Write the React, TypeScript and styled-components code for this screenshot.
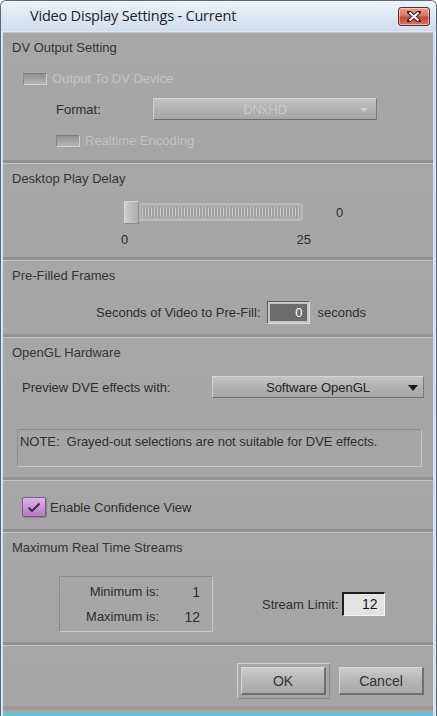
import styled, { createGlobalStyle } from 'styled-components'

const GlobalStyle = createGlobalStyle`
  html, body {
    margin: 0;
    padding: 0;
    background: #ffffff;
  }
  * {
    box-sizing: border-box;
  }
`

const Window = styled.div`
  width: 437px;
  height: 716px;
  display: flex;
  flex-direction: column;
  background: linear-gradient(#e4edf7, #d3e1ef 60px, #d8e4f0);
  border: 1px solid #5a6878;
  border-bottom: none;
  border-radius: 6px 6px 0 0;
  font-family: 'Liberation Sans', Arial, sans-serif;
  font-size: 13px;
  color: #2b2b2b;
  overflow: hidden;
`

const TitleBar = styled.div`
  height: 30px;
  flex: none;
  display: flex;
  align-items: center;
  justify-content: space-between;
  padding: 0 6px 2px 29px;
  background: linear-gradient(#eef4fa, #dce8f4 50%, #cfdeee);
`

const TitleText = styled.div`
  font-family: 'Open Sans', 'Noto Sans', sans-serif;
  font-size: 14.5px;
  color: #1a2230;
  letter-spacing: -0.2px;
`

const CloseButton = styled.div`
  width: 32px;
  height: 19px;
  margin-top: 2px;
  border: 1px solid #5e2a2a;
  border-radius: 3px;
  background: linear-gradient(#e9a592, #d8735c 48%, #c4462d 52%, #d8765c);
  display: flex;
  align-items: center;
  justify-content: center;
  box-shadow: inset 0 0 0 1px rgba(255, 255, 255, 0.45);
`

const Body = styled.div`
  flex: 1;
  margin: 1px 3px 0 2px;
  display: flex;
  flex-direction: column;
  background: #a6a6a6;
  border-bottom: 3px solid #58c8dc;
  box-shadow: 0 3px 0 #2c3a48;
`

const Section = styled.div<{ $h: number; $last?: boolean }>`
  height: ${p => p.$h}px;
  flex: none;
  position: relative;
  display: flex;
  flex-direction: column;
  padding: 7px 0 0 9px;
  border-top: 1px solid #c2c2c2;
  border-bottom: ${p => (p.$last ? '4px solid #999' : '3px solid #929292')};
  background: linear-gradient(#a7a7a7, #a5a5a5);
`

const SectionTitle = styled.div`
  color: #353535;
  height: 16px;
  line-height: 16px;
`

const Row = styled.div<{ $pl?: number; $mt?: number; $gap?: number }>`
  display: flex;
  align-items: center;
  padding-left: ${p => p.$pl ?? 0}px;
  margin-top: ${p => p.$mt ?? 0}px;
  gap: ${p => p.$gap ?? 0}px;
`

const Label = styled.span<{ $dim?: boolean; $w?: number }>`
  color: ${p => (p.$dim ? '#c3c3c3' : '#2e2e2e')};
  width: ${p => (p.$w ? `${p.$w}px` : 'auto')};
  white-space: nowrap;
`

const FlatCheck = styled.div`
  width: 24px;
  height: 12px;
  border-top: 1px solid #7c7c7c;
  border-left: 1px solid #8a8a8a;
  border-right: 1px solid #d0d0d0;
  border-bottom: 1px solid #d0d0d0;
  background: linear-gradient(#909090, #b6b6b6);
`

const PurpleCheck = styled.div`
  width: 24px;
  height: 20px;
  border: 1px solid #7d5a85;
  border-radius: 2px;
  background: linear-gradient(#e2b3ea, #c88ed2 60%, #b87cc2);
  display: flex;
  align-items: center;
  justify-content: center;
  box-shadow: 1px 1px 0 #858585;
`

const Dropdown = styled.div<{ $w: number; $dim?: boolean }>`
  width: ${p => p.$w}px;
  height: 22px;
  position: relative;
  display: flex;
  align-items: center;
  justify-content: center;
  color: ${p => (p.$dim ? '#cacaca' : '#262626')};
  border-top: 1px solid #d4d4d4;
  border-left: 1px solid #d0d0d0;
  border-right: 1px solid #7a7a7a;
  border-bottom: 1px solid #6e6e6e;
  background: linear-gradient(#c4c4c4, #b1b1b1 50%, #a7a7a7);
`

const Arrow = styled.div<{ $dim?: boolean }>`
  position: absolute;
  right: ${p => (p.$dim ? 8 : 5)}px;
  top: ${p => (p.$dim ? 9 : 8)}px;
  width: 0;
  height: 0;
  border-left: ${p => (p.$dim ? 4 : 5)}px solid transparent;
  border-right: ${p => (p.$dim ? 4 : 5)}px solid transparent;
  border-top: ${p => (p.$dim ? 4 : 6)}px solid ${p => (p.$dim ? '#d0d0d0' : '#1a1a1a')};
`

const SliderRow = styled.div`
  display: flex;
  align-items: center;
  margin: 14px 0 0 112px;
  height: 22px;
`

const Thumb = styled.div`
  width: 15px;
  height: 23px;
  flex: none;
  border: 1px solid #8e8e8e;
  border-top-color: #d6d6d6;
  border-left-color: #d6d6d6;
  background: linear-gradient(90deg, #cfcfcf, #bcbcbc 50%, #adadad);
`

const Track = styled.div`
  width: 164px;
  height: 18px;
  border: 1px solid #bdbdbd;
  border-left: none;
  border-radius: 0 4px 4px 0;
  background:
    repeating-linear-gradient(90deg, #cacaca 0 1px, #a0a0a0 1px 3px),
    #a8a8a8;
  background-clip: content-box;
  padding: 3px 2px 3px 0;
  box-shadow: inset 0 0 0 2px #b4b4b4;
`

const SliderValue = styled.span`
  margin-left: 33px;
  color: #2e2e2e;
`

const ScaleRow = styled.div`
  display: flex;
  justify-content: space-between;
  width: 190px;
  margin: 9px 0 0 109px;
`

const DarkInput = styled.div`
  width: 43px;
  height: 23px;
  border: 1px solid #e0e0e0;
  border-top-color: #5c5c5c;
  border-left-color: #5c5c5c;
  padding: 2px;
  background: #c6c6c6;
  display: flex;
`

const DarkInner = styled.div`
  flex: 1;
  background: #6c6c6c;
  color: #ffffff;
  text-align: right;
  padding-right: 4px;
  line-height: 17px;
`

const LightInput = styled.div`
  width: 43px;
  height: 24px;
  border: 1px solid #f4f4f4;
  border-top: 2px solid #1e1e1e;
  border-left: 2px solid #1e1e1e;
  background: #e4e4e4;
  color: #1a1a1a;
  text-align: right;
  padding-right: 6px;
  line-height: 20px;
  font-size: 14px;
`

const NoteBox = styled.div`
  width: 405px;
  height: 38px;
  margin: 31px 0 0 5px;
  border: 1px solid #c4c4c4;
  border-top-color: #8e8e8e;
  border-left-color: #8e8e8e;
  padding: 4px 0 0 2px;
  color: #303030;
  letter-spacing: -0.05px;
`

const StreamsBody = styled.div`
  display: flex;
  align-items: center;
  margin: 20px 0 0 47px;
`

const LimitBox = styled.div`
  width: 154px;
  height: 56px;
  border: 1px solid #c4c4c4;
  border-top-color: #8c8c8c;
  border-left-color: #8c8c8c;
  display: grid;
  grid-template-columns: 99px 41px;
  align-content: center;
  row-gap: 9px;
  color: #2e2e2e;
`

const LimitKey = styled.span`
  text-align: right;
`

const LimitVal = styled.span`
  text-align: right;
  font-size: 14px;
`

const Buttons = styled.div`
  display: flex;
  justify-content: flex-end;
  align-items: center;
  gap: 9px;
  margin: 10px 9px 0 0;
`

const FocusRing = styled.div`
  border: 1px solid #8a8a8a;
  border-top-color: #d0d0d0;
  border-left-color: #d0d0d0;
  padding: 3px;
`

const Button = styled.div<{ $w: number }>`
  width: ${p => p.$w}px;
  height: 28px;
  display: flex;
  align-items: center;
  justify-content: center;
  color: #333333;
  font-size: 14px;
  border-top: 1px solid #dadada;
  border-left: 1px solid #d4d4d4;
  border-right: 2px solid #707070;
  border-bottom: 2px solid #6e6e6e;
  background: linear-gradient(#cbcbcb, #b5b5b5 55%, #a9a9a9);
`

export default function App() {
  return (
    <>
      <GlobalStyle />
      <Window>
        <TitleBar>
          <TitleText>Video Display Settings - Current</TitleText>
          <CloseButton>
            <svg width="14" height="11" viewBox="0 0 14 11">
              <path d="M2 1 L12 10 M12 1 L2 10" stroke="#4a2020" strokeWidth="4" strokeLinecap="square" />
              <path d="M2.5 1.5 L11.5 9.5 M11.5 1.5 L2.5 9.5" stroke="#ffffff" strokeWidth="2.2" />
            </svg>
          </CloseButton>
        </TitleBar>
        <Body>
          <Section $h={131}>
            <SectionTitle>DV Output Setting</SectionTitle>
            <Row $pl={11} $mt={15} $gap={5}>
              <FlatCheck />
              <Label $dim>Output To DV Device</Label>
            </Row>
            <Row $pl={44} $mt={12}>
              <Label $w={97}>Format:</Label>
              <Dropdown $w={224} $dim>
                DNxHD
                <Arrow $dim />
              </Dropdown>
            </Row>
            <Row $pl={44} $mt={13} $gap={5}>
              <FlatCheck />
              <Label $dim>Realtime Encoding</Label>
            </Row>
          </Section>

          <Section $h={97}>
            <SectionTitle>Desktop Play Delay</SectionTitle>
            <SliderRow>
              <Thumb />
              <Track />
              <SliderValue>0</SliderValue>
            </SliderRow>
            <ScaleRow>
              <span>0</span>
              <span>25</span>
            </ScaleRow>
          </Section>

          <Section $h={77}>
            <SectionTitle>Pre-Filled Frames</SectionTitle>
            <Row $pl={84} $mt={17} $gap={6}>
              <Label>Seconds of Video to Pre-Fill:</Label>
              <DarkInput>
                <DarkInner>0</DarkInner>
              </DarkInput>
              <Label style={{ marginLeft: 2 }}>seconds</Label>
            </Row>
          </Section>

          <Section $h={143}>
            <SectionTitle>OpenGL Hardware</SectionTitle>
            <Row $pl={10} $mt={15}>
              <Label $w={190}>Preview DVE effects with:</Label>
              <Dropdown $w={212}>
                Software OpenGL
                <Arrow />
              </Dropdown>
            </Row>
            <NoteBox>NOTE:&nbsp; Grayed-out selections are not suitable for DVE effects.</NoteBox>
          </Section>

          <Section $h={52}>
            <Row $pl={10} $mt={9} $gap={4}>
              <PurpleCheck>
                <svg width="14" height="11" viewBox="0 0 14 11">
                  <path d="M1.5 5.5 L5 9 L12.5 1.5" stroke="#3a2a40" strokeWidth="2" fill="none" />
                </svg>
              </PurpleCheck>
              <Label>Enable Confidence View</Label>
            </Row>
          </Section>

          <Section $h={113}>
            <SectionTitle>Maximum Real Time Streams</SectionTitle>
            <StreamsBody>
              <LimitBox>
                <LimitKey>Minimum is:</LimitKey>
                <LimitVal>1</LimitVal>
                <LimitKey>Maximum is:</LimitKey>
                <LimitVal>12</LimitVal>
              </LimitBox>
              <Label style={{ marginLeft: 49 }}>Stream Limit:</Label>
              <LightInput style={{ marginLeft: 3 }}>12</LightInput>
            </StreamsBody>
          </Section>

          <Section $h={65} $last>
            <Buttons>
              <FocusRing>
                <Button $w={85}>OK</Button>
              </FocusRing>
              <Button $w={85}>Cancel</Button>
            </Buttons>
          </Section>
        </Body>
      </Window>
    </>
  )
}
